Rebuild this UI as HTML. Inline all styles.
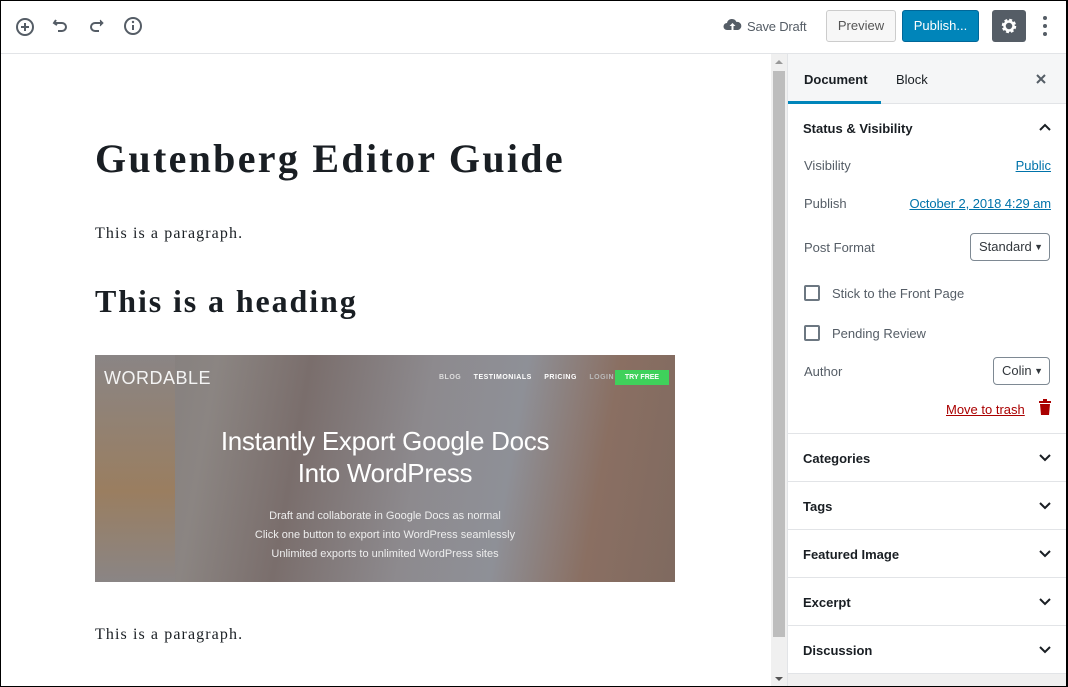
<!DOCTYPE html>
<html><head><meta charset="utf-8"><style>
*{box-sizing:border-box;margin:0;padding:0}
body{width:1068px;height:687px;overflow:hidden;background:#fff;font-family:"Liberation Sans",sans-serif;color:#1e1e1e;position:relative}
.frame{position:absolute;inset:0;border:1px solid #000;border-right:2px solid #000;pointer-events:none;z-index:10}
.hdr{position:absolute;left:0;top:0;width:1068px;height:54px;border-bottom:1px solid #e2e4e7;background:#fff}
.ab{position:absolute}
.btn{position:absolute;top:10px;height:32px;border-radius:3px;font-size:13px;line-height:30px;text-align:center}
.sb{position:absolute;left:771px;top:54px;width:16px;height:633px;background:#f0f0f0}
.thumb{position:absolute;left:773px;top:71px;width:12px;height:566px;background:#bdbdbd}
.side{position:absolute;left:787px;top:54px;width:281px;height:633px;border-left:1px solid #e2e4e7;background:#fff;font-size:13px}
.tabs{height:50px;background:#f5f6f7;border-bottom:1px solid #e2e4e7;position:relative}
.row{position:absolute;left:16px;right:16px;color:#555d66;font-size:13px}
.sec{position:absolute;left:0;right:0;height:48px;border-top:1px solid #e2e4e7;font-weight:bold;font-size:13px;padding:17px 15px;color:#191e23}
.chev{position:absolute;right:17px;top:20px}
.sel{position:absolute;border:1px solid #7e8993;border-radius:4px;height:28px;font-size:13px;color:#32373c;line-height:26px;padding-left:8px}
.cb{position:absolute;left:16px;width:16px;height:16px;border:2px solid #6c7781;border-radius:2px}
a{color:#0073aa;text-decoration:underline}
.ed{font-family:"Liberation Serif","DejaVu Serif",serif;color:#191e23;position:absolute;left:95px}
</style></head><body>
<div class="hdr">
<svg class="ab" style="left:14px;top:16px" width="22" height="22" viewBox="0 0 22 22"><circle cx="11" cy="11" r="8" fill="none" stroke="#555d66" stroke-width="2"/><path d="M11 7v8M7 11h8" stroke="#555d66" stroke-width="2"/></svg>
<svg class="ab" style="left:51px;top:16px" width="20" height="20" viewBox="0 0 20 20"><path d="M5 4L3 7l3 2" fill="none" stroke="#555d66" stroke-width="2"/><path d="M3 7h8a4 4 0 010 8H7" fill="none" stroke="#555d66" stroke-width="2"/></svg>
<svg class="ab" style="left:86px;top:16px" width="20" height="20" viewBox="0 0 20 20"><path d="M14 4l3 3-3 3" fill="#555d66" stroke="#555d66" stroke-width="1"/><path d="M16 7H9a4 4 0 000 8h4" fill="none" stroke="#555d66" stroke-width="2"/></svg>
<svg class="ab" style="left:122px;top:15px" width="22" height="22" viewBox="0 0 22 22"><circle cx="11" cy="11" r="8" fill="none" stroke="#555d66" stroke-width="2"/><path d="M11 10v5" stroke="#555d66" stroke-width="2"/><circle cx="11" cy="7" r="1.2" fill="#555d66"/></svg>
<svg class="ab" style="left:723px;top:17px" width="19" height="16" viewBox="0 0 19 16"><path d="M4 13a3.5 3.5 0 010-7 5 5 0 019.5-1A3.5 3.5 0 0115 13z" fill="#555d66"/><path d="M9.5 6l-3 3h2v4h2V9h2z" fill="#fff"/></svg>
<div class="ab" style="left:747px;top:19px;font-size:13px;color:#555d66;letter-spacing:-0.2px">Save Draft</div>
<div class="btn" style="left:826px;width:70px;border:1px solid #ccc;background:#f7f7f7;color:#555">Preview</div>
<div class="btn" style="left:902px;width:77px;background:#0085ba;border:1px solid #006799;color:#fff">Publish...</div>
<div class="btn" style="left:992px;width:34px;background:#555d66"><svg width="20" height="20" viewBox="0 0 20 20" style="margin-top:6px"><circle cx="10" cy="10" r="5.5" fill="none" stroke="#fff" stroke-width="3.5" stroke-dasharray="2.6 1.72"/><circle cx="10" cy="10" r="4.5" fill="none" stroke="#fff" stroke-width="2.5"/></svg></div>
<div class="ab" style="left:1043px;top:16px;width:4px">
<div style="width:4px;height:4px;border-radius:2px;background:#555d66;margin-bottom:4px"></div><div style="width:4px;height:4px;border-radius:2px;background:#555d66;margin-bottom:4px"></div><div style="width:4px;height:4px;border-radius:2px;background:#555d66"></div></div>
</div>

<div class="ed" style="top:135px;font-size:40px;font-weight:bold;letter-spacing:2.3px">Gutenberg Editor Guide</div>
<div class="ed" style="top:225px;font-size:16px;letter-spacing:1.1px">This is a paragraph.</div>
<div class="ed" style="top:283px;font-size:32px;font-weight:bold;letter-spacing:1.9px">This is a heading</div>
<div class="ab" style="left:95px;top:355px;width:580px;height:227px;background:linear-gradient(100deg,#7f7a7a 0%,#8b8582 20%,#7a6e6c 35%,#8d8a8e 55%,#8e9097 70%,#8a6f62 85%,#7f6a60 100%);overflow:hidden">
<div class="ab" style="left:0;top:0;width:80px;height:227px;background:linear-gradient(180deg,#8a8585,#9a7e60 60%,#8a8585)"></div>
<div class="ab" style="left:9px;top:13px;color:#f4f4f4;font-size:18px;letter-spacing:.5px">WORDABLE</div>
<div class="ab" style="left:344px;top:19px;color:#ddd;font-size:7px;font-weight:bold;letter-spacing:.5px;word-spacing:10px">BLOG <span style="color:#fff">TESTIMONIALS PRICING</span> <span style="color:#bbb">LOGIN</span></div>
<div class="ab" style="left:520px;top:15px;width:54px;height:15px;background:#3fd15b;color:#fff;font-size:7px;font-weight:bold;text-align:center;line-height:15px">TRY FREE</div>
<div class="ab" style="left:0;width:580px;top:70px;text-align:center;color:#fff;font-size:26px;line-height:32px;letter-spacing:-0.3px">Instantly Export Google Docs<br>Into WordPress</div>
<div class="ab" style="left:0;width:580px;top:152px;text-align:center;color:#eee;font-size:11px;line-height:19px">Draft and collaborate in Google Docs as normal<br>Click one button to export into WordPress seamlessly<br>Unlimited exports to unlimited WordPress sites</div>
</div>
<div class="ed" style="top:626px;font-size:16px;letter-spacing:1.1px">This is a paragraph.</div>

<div class="sb"></div><div class="thumb"></div>
<div class="ab" style="left:775px;top:60px;width:0;height:0;border:4px solid transparent;border-bottom-color:#999;border-top:0"></div>
<div class="ab" style="left:775px;top:677px;width:0;height:0;border:4px solid transparent;border-top-color:#555;border-bottom:0"></div>

<div class="side">
<div class="tabs">
<div class="ab" style="left:16px;top:18px;font-weight:bold;color:#191e23">Document</div>
<div class="ab" style="left:108px;top:18px;color:#191e23">Block</div>
<div class="ab" style="left:0;top:47px;width:93px;height:3px;background:#0085ba"></div>
<svg class="ab" style="left:247px;top:19px" width="12" height="12" viewBox="0 0 12 12"><path d="M2 2l8 8M10 2l-8 8" stroke="#555d66" stroke-width="2"/></svg>
</div>
<div class="ab" style="left:15px;top:67px;font-weight:bold;color:#191e23">Status &amp; Visibility</div>
<svg class="ab" style="left:251px;top:69px" width="12" height="8" viewBox="0 0 12 8"><path d="M1 7l5-5 5 5" fill="none" stroke="#191e23" stroke-width="2"/></svg>
<div class="row" style="top:104px">Visibility<a style="position:absolute;right:1px">Public</a></div>
<div class="row" style="top:142px">Publish<a style="position:absolute;right:1px;letter-spacing:-0.1px">October 2, 2018 4:29 am</a></div>
<div class="row" style="top:186px">Post Format</div>
<div class="sel" style="left:182px;top:179px;width:80px">Standard<span style="position:absolute;right:6px;font-size:9px">▼</span></div>
<div class="cb" style="top:231px"></div><div class="row" style="left:44px;top:232px">Stick to the Front Page</div>
<div class="cb" style="top:271px"></div><div class="row" style="left:44px;top:272px">Pending Review</div>
<div class="row" style="top:310px">Author</div>
<div class="sel" style="left:205px;top:303px;width:57px">Colin<span style="position:absolute;right:6px;font-size:9px">▼</span></div>
<div class="ab" style="left:158px;top:348px;color:#a00;text-decoration:underline">Move to trash</div>
<svg class="ab" style="left:250px;top:345px" width="14" height="16" viewBox="0 0 14 16"><rect x="1" y="2" width="12" height="2" fill="#a00"/><rect x="5" y="0" width="4" height="2" fill="#a00"/><path d="M2 5h10l-1 11H3z" fill="#a00"/></svg>
<div class="sec" style="top:379px">Categories<svg class="chev" width="12" height="8" viewBox="0 0 12 8"><path d="M1 1l5 5 5-5" fill="none" stroke="#191e23" stroke-width="2"/></svg></div>
<div class="sec" style="top:427px">Tags<svg class="chev" width="12" height="8" viewBox="0 0 12 8"><path d="M1 1l5 5 5-5" fill="none" stroke="#191e23" stroke-width="2"/></svg></div>
<div class="sec" style="top:475px">Featured Image<svg class="chev" width="12" height="8" viewBox="0 0 12 8"><path d="M1 1l5 5 5-5" fill="none" stroke="#191e23" stroke-width="2"/></svg></div>
<div class="sec" style="top:523px">Excerpt<svg class="chev" width="12" height="8" viewBox="0 0 12 8"><path d="M1 1l5 5 5-5" fill="none" stroke="#191e23" stroke-width="2"/></svg></div>
<div class="sec" style="top:571px">Discussion<svg class="chev" width="12" height="8" viewBox="0 0 12 8"><path d="M1 1l5 5 5-5" fill="none" stroke="#191e23" stroke-width="2"/></svg></div>
<div class="ab" style="left:0;top:619px;width:281px;height:14px;background:#f0f0f0;border-top:1px solid #e2e4e7"></div>
</div>
<div class="frame"></div>
</body></html>
